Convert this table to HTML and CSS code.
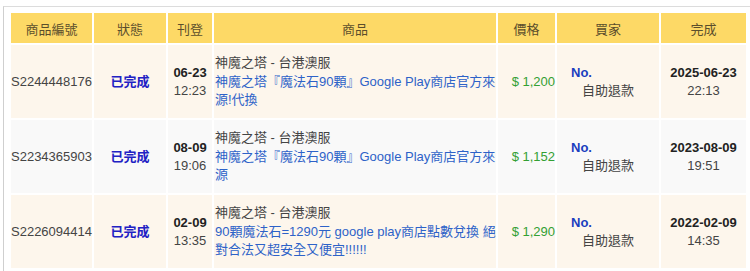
FILE: index.html
```html
<!DOCTYPE html>
<html lang="zh-Hant">
<head>
<meta charset="utf-8">
<title>訂單</title>
<link rel="stylesheet" href="styles.css">
</head>
<body>
<div class="panel">
  <table class="orders">
    <colgroup>
      <col class="c-id"><col class="c-status"><col class="c-posted"><col class="c-item"><col class="c-price"><col class="c-buyer"><col class="c-done">
    </colgroup>
    <thead>
      <tr><th>商品編號</th><th>狀態</th><th>刊登</th><th>商品</th><th>價格</th><th>買家</th><th>完成</th></tr>
    </thead>
    <tbody>
      <tr class="cream">
        <td class="id">S2244448176</td>
        <td class="status">已完成</td>
        <td class="stamp"><b>06-23</b><br>12:23</td>
        <td class="item"><div class="game">神魔之塔 - 台港澳服</div><a class="title" href="#">神魔之塔『魔法石90顆』Google Play商店官方來源!代換</a></td>
        <td class="price">$ 1,200</td>
        <td class="buyer"><div class="no">No.</div><div class="refund">自助退款</div></td>
        <td class="stamp"><b>2025-06-23</b><br>22:13</td>
      </tr>
      <tr class="grey">
        <td class="id">S2234365903</td>
        <td class="status">已完成</td>
        <td class="stamp"><b>08-09</b><br>19:06</td>
        <td class="item"><div class="game">神魔之塔 - 台港澳服</div><a class="title" href="#">神魔之塔『魔法石90顆』Google Play商店官方來源</a></td>
        <td class="price">$ 1,152</td>
        <td class="buyer"><div class="no">No.</div><div class="refund">自助退款</div></td>
        <td class="stamp"><b>2023-08-09</b><br>19:51</td>
      </tr>
      <tr class="cream">
        <td class="id">S2226094414</td>
        <td class="status">已完成</td>
        <td class="stamp"><b>02-09</b><br>13:35</td>
        <td class="item"><div class="game">神魔之塔 - 台港澳服</div><a class="title" href="#">90顆魔法石=1290元 google play商店點數兌換 絕對合法又超安全又便宜!!!!!!</a></td>
        <td class="price">$ 1,290</td>
        <td class="buyer"><div class="no">No.</div><div class="refund">自助退款</div></td>
        <td class="stamp"><b>2022-02-09</b><br>14:35</td>
      </tr>
    </tbody>
  </table>
</div>
</body>
</html>
```
FILE: styles.css
```css
html, body {
  margin: 0;
  padding: 0;
  background: #ffffff;
  overflow: hidden;
}
body {
  font-family: "Liberation Sans", Arial, "Noto Sans CJK TC", sans-serif;
  font-size: 13px;
  color: #444444;
}
.panel {
  margin: 6px 0 0 3px;
  border-top: 1px solid #dcdcdc;
  border-left: 1px solid #cfcfcf;
  padding: 4px 0 4px 5px;
  width: 760px;
}
.orders {
  border-collapse: separate;
  border-spacing: 2px;
  table-layout: fixed;
  width: 739px;
}
.c-id { width: 81px; }
.c-status { width: 72px; }
.c-posted { width: 44px; }
.c-item { width: 282px; }
.c-price { width: 57px; }
.c-buyer { width: 102px; }
.c-done { width: 85px; }
.orders th {
  background: #fdd966;
  color: #5b4e2c;
  font-weight: normal;
  height: 30px;
  padding: 0;
  text-align: center;
  vertical-align: middle;
}
.orders td {
  height: 73px;
  padding: 1px 0 0;
  box-sizing: border-box;
  vertical-align: middle;
  text-align: center;
  line-height: 18.5px;
}
.cream td { background: #fdf6ec; }
.grey td { background: #f9f9f9; }
.id { color: #444444; white-space: nowrap; }
.status { color: #2121c4; font-weight: bold; }
.stamp { color: #444444; }
.stamp b { color: #222222; }
.orders td.item { text-align: left; padding-left: 1px; }
.game { color: #444444; }
.title { color: #2d62c8; text-decoration: none; }
.orders td.price { color: #33a033; text-align: right; white-space: nowrap; }
.orders td.buyer { text-align: center; }
.no { color: #1b3ebf; font-weight: bold; text-align: left; padding-left: 14px; }
.refund { color: #444444; }
```
